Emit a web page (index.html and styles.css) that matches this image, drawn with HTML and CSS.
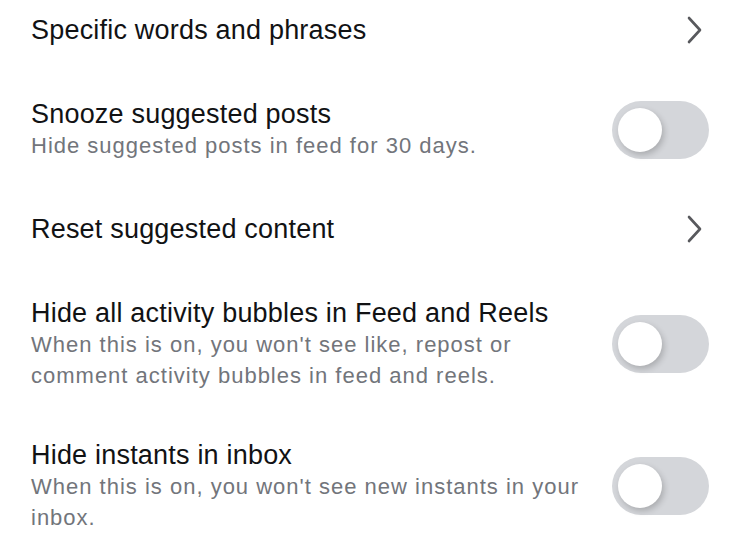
FILE: index.html
```html
<!DOCTYPE html>
<html>
<head>
  <meta charset="utf-8">
  <title>Suggested content</title>
  <link rel="stylesheet" href="styles.css">
</head>
<body>
  <div class="list">
    <div class="row">
      <div class="text">
        <div class="title">Specific words and phrases</div>
      </div>
      <svg class="chevron" width="16" height="28" viewBox="0 0 16 28"><path d="M3 2 L14 14 L3 26" fill="none" stroke="#58595d" stroke-width="2.6" stroke-linecap="round" stroke-linejoin="round"/></svg>
    </div>

    <div class="row">
      <div class="text">
        <div class="title">Snooze suggested posts</div>
        <div class="sub">Hide suggested posts in feed for 30 days.</div>
      </div>
      <div class="toggle"><span class="knob"></span></div>
    </div>

    <div class="row">
      <div class="text">
        <div class="title">Reset suggested content</div>
      </div>
      <svg class="chevron" width="16" height="28" viewBox="0 0 16 28"><path d="M3 2 L14 14 L3 26" fill="none" stroke="#58595d" stroke-width="2.6" stroke-linecap="round" stroke-linejoin="round"/></svg>
    </div>

    <div class="row">
      <div class="text">
        <div class="title">Hide all activity bubbles in Feed and Reels</div>
        <div class="sub">When this is on, you won't see like, repost or comment activity bubbles in feed and reels.</div>
      </div>
      <div class="toggle"><span class="knob"></span></div>
    </div>

    <div class="row">
      <div class="text">
        <div class="title">Hide instants in inbox</div>
        <div class="sub">When this is on, you won't see new instants in your inbox.</div>
      </div>
      <div class="toggle"><span class="knob"></span></div>
    </div>
  </div>
</body>
</html>
```

FILE: styles.css
```css
body {
  margin: 0;
  padding: 0;
  background: #ffffff;
  font-family: "Liberation Sans", Arial, sans-serif;
  color: #111214;
}

.list {
  padding: 0 30px 0 31px;
}

.row {
  display: flex;
  align-items: center;
  justify-content: space-between;
  padding: 26px 0;
}

.row:first-child {
  padding-top: 14px;
}

.row:last-child {
  padding-top: 22px;
}

.text {
  max-width: 565px;
}

.title {
  font-size: 27px;
  line-height: 32px;
  letter-spacing: 0.2px;
}

.sub {
  font-size: 22px;
  line-height: 31px;
  letter-spacing: 1px;
  color: #72757b;
}

.chevron {
  margin-right: 7px;
}

.toggle {
  position: relative;
  width: 97px;
  height: 58px;
  border-radius: 29px;
  background: #d4d6da;
  flex-shrink: 0;
}

.knob {
  position: absolute;
  top: 7px;
  left: 6px;
  width: 44px;
  height: 44px;
  border-radius: 50%;
  background: #ffffff;
  box-shadow: 2px 3px 6px rgba(0, 0, 0, 0.2);
}
```
